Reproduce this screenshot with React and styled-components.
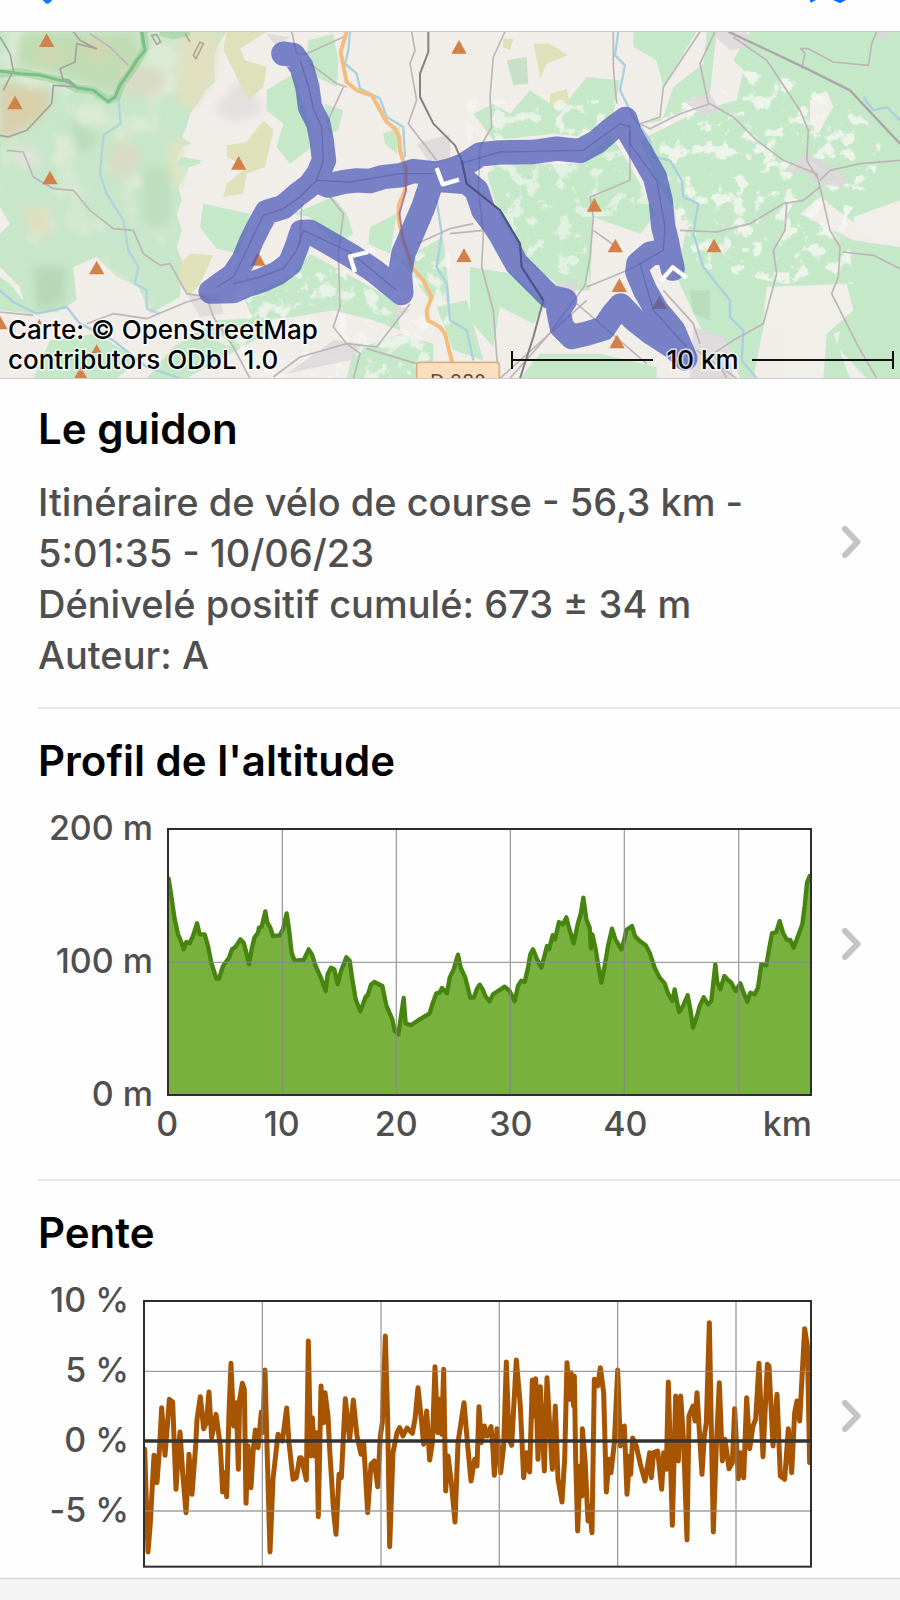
import React from "react";
import styled, { createGlobalStyle } from "styled-components";

const GlobalStyle = createGlobalStyle`
  * { box-sizing: border-box; }
  body {
    margin: 0;
    background: #fff;
    font-family: Inter, "Liberation Sans", sans-serif;
  }
`;

const Screen = styled.div`
  display: flex;
  flex-direction: column;
  height: 100vh;
  overflow: hidden;
  background: #fefefe;
`;

const NavBar = styled.header`
  display: flex;
  flex: none;
  justify-content: space-between;
  height: 31px;
  padding: 0 46px 0 36px;
`;

const IconButton = styled.button`
  display: block;
  height: 20px;
  padding: 0;
  border: 0;
  background: none;
`;

const Content = styled.main`
  flex: 1;
  min-height: 0;
  overflow: hidden;
`;

const TabBar = styled.footer`
  flex: none;
  height: 22px;
  border-top: 1px solid #cfcfd1;
  background: #f4f4f5;
`;

const MapFrame = styled.div`
  position: relative;
  height: 348px;
  border-top: 1px solid #cccccc;
  border-bottom: 1px solid #cccccc;
  overflow: hidden;
`;

const MapDrawing = styled.svg`
  display: block;
  width: 100%;
  height: 100%;
`;

const MapCaption = styled.div`
  position: absolute;
  right: 6px;
  bottom: 3px;
  left: 8px;
  display: flex;
  align-items: flex-end;
  justify-content: space-between;
  color: #000;
  font-size: 26px;
  font-weight: 500;
  line-height: 30px;
  -webkit-text-stroke: 3px rgba(255, 255, 255, 0.7);
  paint-order: stroke fill;
`;

const Attribution = styled.p`
  margin: 0;
`;

const ScaleBar = styled.div`
  display: flex;
  align-items: center;
  justify-content: space-between;
  width: 383px;
`;

const ScaleArm = styled.span`
  width: 142px;
  height: 18px;
  border-${(p) => p.$side}: 2px solid #111;
  background: linear-gradient(#111, #111) center / 100% 2px no-repeat;
`;

const Section = styled.section`
  margin-left: 38px;
  border-bottom: ${(p) => (p.$last ? "0" : "2px solid #e6e6e7")};
`;

const SectionLink = styled.a`
  display: flex;
  align-items: center;
  gap: 28px;
  padding: ${(p) => (p.$compact ? 24 : 26)}px 38px 26px 0;
  color: #4f4f50;
  text-decoration: none;
`;

const SectionBody = styled.div`
  flex: 1;
  min-width: 0;
`;

const Title = styled.h2`
  margin: 0 0 ${(p) => p.$gap}px;
  color: #000;
  font-size: 42px;
  font-weight: 600;
  line-height: 52px;
`;

const Details = styled.p`
  margin: 0;
  font-size: 38px;
  font-weight: 500;
  line-height: 51px;
`;

const Chart = styled.div`
  display: grid;
  grid-template-columns: ${(p) => p.$axis}px minmax(0, 1fr);
  column-gap: 14px;
  align-content: start;
  min-height: 325px;
`;

const YAxis = styled.div`
  display: flex;
  flex-direction: column;
  gap: ${(p) => p.$gap}px;
  height: 268px;
  margin-top: -20px;
  font-size: 34px;
  font-weight: 500;
  font-feature-settings: "calt" 0;
  line-height: 40px;
  text-align: right;
  white-space: nowrap;
`;

const Plot = styled.svg`
  display: block;
  width: 100%;
  height: 268px;
`;

const XAxis = styled.div`
  grid-column: 2;
  display: grid;
  grid-template-columns: repeat(5, 100fr) 113fr;
  margin: 8px 0 0 -57px;
  font-size: 34px;
  font-weight: 500;
  line-height: 40px;
  text-align: center;
`;

const Unit = styled.span`
  text-align: right;
`;

const ChevronIcon = styled.svg`
  flex: none;
  width: 22px;
  height: 34px;
`;

function Chevron() {
  return (
    <ChevronIcon viewBox="0 0 22 34" aria-hidden="true">
      <path d="M5 4L17.500 17L5 30" fill="none" stroke="#c4c4c6" strokeWidth="6" strokeLinecap="round" strokeLinejoin="round" />
    </ChevronIcon>
  );
}

const HALF = 1350;
const series = (west, east) =>
  west.trim() + " " +
  east.trim().split(/\s+/).map((pt) => {
    const [x, y] = pt.split(",").map(Number);
    return `${x + HALF},${y}`;
  }).join(" ");

const altitude = series(
  `507,478 515,530 525,600 535,645 542,660 552,690 560,668 570,672 580,650 592,612 600,645 615,645 625,680 635,730 650,778 658,778
   670,740 688,715 697,690 708,682 722,660 732,670 740,700 748,735 756,690 764,655 775,640 778,625 786,622 797,576 803,610 812,625
   820,650 840,648 850,630 861,582 868,630 876,700 885,724 912,722 927,690 937,705 948,740 965,778 978,815 984,765 994,745 1004,750
   1014,795 1024,755 1032,735 1040,714 1050,724 1058,780 1068,840 1082,876 1098,832 1104,828 1114,796 1124,788 1148,800 1160,858
   1178,900 1185,935 1196,945 1204,890 1212,836 1218,912 1234,918 1260,900 1290,882 1298,855 1310,822 1320,820 1327,806 1342,822 1350,775`,
  `12,750 25,706 33,745 47,775 62,835 72,835 82,808 90,796 100,812 107,830 120,846 130,825 145,815 165,802 180,815 195,846 205,800
   215,784 225,788 235,745 242,705 250,690 260,715 275,745 283,715 292,680 298,690 309,648 316,660 328,608 340,615 350,594 358,625
   372,672 384,615 394,580 401,535 410,600 420,625 424,688 428,645 438,690 447,745 455,790 465,740 475,680 487,628 497,660 515,690
   524,660 530,632 547,620 556,650 570,665 588,678 600,700 615,745 630,775 645,792 655,822 668,845 675,810 688,878 700,860 714,828
   722,870 730,925 742,890 750,860 762,834 775,855 785,845 797,735 803,790 812,810 824,770 835,782 845,790 858,815 872,792 882,820
   893,847 902,820 915,825 925,805 935,735 950,738 958,690 967,642 980,638 990,605 1000,640 1012,662 1022,662 1032,685 1045,650
   1058,615 1065,560 1072,490 1080,470`
);

const slope = series(
  `435,870 445,1178 452,1090 463,888 472,970 480,860 486,745 496,888 503,800 509,720 519,728 524,860 529,990 536,880 541,818 549,940
   559,1060 564,980 568,885 577,1005 588,860 592,780 602,712 612,808 620,790 628,698 636,835 649,765 662,860 669,998 674,940 681,1012
   688,760 694,612 702,800 710,730 716,930 720,720 728,672 734,690 739,1032 745,860 754,985 760,880 767,812 775,865 785,758 789,820
   796,632 802,860 811,1178 820,960 835,825 848,845 861,746 868,850 880,960 890,955 900,895 905,895 920,962 926,545 933,890 938,775
   945,890 951,820 956,1072 964,680 972,790 976,700 985,770 990,870 1002,1060 1009,1125 1018,945 1025,955 1037,718 1050,840 1061,722
   1072,830 1084,885 1092,850 1104,1060 1114,915 1124,905 1134,982 1142,830 1148,790 1157,530 1164,780 1170,1162 1180,880 1192,820
   1200,805 1210,830 1222,806 1238,822 1246,780 1255,685 1264,770 1272,855 1281,755 1290,902 1298,850 1306,622 1314,820 1320,720
   1326,825 1332,630 1338,995 1345,890`,
  `5,970 16,1088 25,850 43,730 55,870 64,965 75,900 82,920 88,742 95,850 104,800 112,830 124,802 130,870 134,948 142,808 153,940
   162,860 170,608 178,840 186,858 200,602 212,740 222,955 230,880 240,938 248,662 252,770 258,658 265,900 272,682 284,935 292,655
   300,800 308,930 317,740 325,960 337,1028 345,900 352,610 360,720 364,640 372,740 374,650 378,900 384,1115 392,920 397,1010
   398,808 406,900 415,1085 419,1040 427,1120 434,660 444,680 452,625 462,700 470,998 478,900 484,940 494,850 504,632 512,860
   524,800 532,1005 540,890 543,945 549,836 560,860 572,915 586,965 600,880 605,955 612,880 624,875 636,990 642,880 650,930
   656,668 668,1098 678,710 686,905 693,710 702,850 712,1142 718,770 730,740 736,785 742,700 757,945 764,830 770,790 779,490
   791,1118 800,860 809,670 818,905 826,840 838,928 848,910 855,748 866,958 873,880 882,955 891,715 900,868 910,800 918,780
   928,612 940,892 953,615 958,620 970,860 982,705 992,950 1005,960 1016,808 1026,940 1035,760 1042,725 1050,785 1065,508
   1073,560 1080,910`
);

const peaks = [
  [140, 120], [45, 307], [150, 532], [290, 802], [716, 488], [774, 776], [0, 967], [242, 1120],
  [1377, 140], [1783, 614], [1846, 736], [2142, 736], [1392, 765], [1858, 855], [1851, 1024],
];

const ROUTE =
  "M850 160L880 164L905 200L922 260L930 320L955 370L965 420L972 480L955 520L930 555L890 585L850 620L800 635L780 670L755 720L730 780L700 825L632 874L700 872L740 855L790 838L830 820L870 790L890 740L905 695L930 694L1000 735L1060 770L1120 810L1170 850L1204 878L1200 820L1210 760L1240 690L1270 620L1290 560L1310 520" +
  "M950 540L985 556L1030 545L1070 540L1110 542L1150 530L1200 525L1240 512L1310 520L1350 510L1390 495L1440 462L1500 456L1600 455L1670 445L1740 452L1790 425L1830 390L1876 356L1890 400L1925 460L1965 530L1982 600L1990 680L2000 720L2010 770L2018 805" +
  "M2000 750L1950 760L1915 790L1912 815L1935 870L1970 930L2020 990L2056 1074L2020 1040L1950 995L1900 955L1862 915L1840 940L1810 985L1760 1000L1715 1010L1685 980L1675 930L1695 900L1650 890L1600 840L1550 790L1500 700L1480 670L1450 630L1430 570L1400 545L1330 540";

function RouteMap() {
  return (
    <MapDrawing viewBox="0 94 2700 1040" preserveAspectRatio="xMidYMid slice" role="img" aria-label="Le guidon">
      <defs>
        <filter id="clearings" x="0" y="0" width="1" height="1">
          <feTurbulence type="fractalNoise" baseFrequency="0.021" numOctaves="4" seed="8" />
          <feColorMatrix values="0 0 0 0 0.93  0 0 0 0 0.93  0 0 0 0 0.895  10 0 0 0 -5.5" />
          <feComposite in2="SourceGraphic" operator="in" />
        </filter>
        <filter id="relief" x="0" y="0" width="1" height="1">
          <feTurbulence type="fractalNoise" baseFrequency="0.007" numOctaves="3" seed="3" />
          <feColorMatrix values="0 0 0 0 0.87  0 0 0 0 0.85  0 0 0 0 0.75  5 0 0 0 -2.6" />
          <feComposite in2="SourceGraphic" operator="in" />
        </filter>
        <filter id="soft" x="-20%" y="-20%" width="140%" height="140%">
          <feGaussianBlur stdDeviation="12" />
        </filter>
      </defs>
      <rect y="94" width="2700" height="1040" fill="#f1eeea" />

      {/* uplands west of the valley */}
      <path d="M0 94H680L650 140L640 180L645 245L615 270L600 300L570 340L560 380L545 410L575 430L545 440L530 480L600 478L600 490L565 500L560 520L535 560L545 600L530 640L545 690L530 740L545 780L540 890L450 940L415 860L350 830L290 770L220 800L230 900L170 935L80 940L60 860L0 800V700L30 670L0 620Z" fill="#c8e6c9" />
      <path d="M0 94H680L640 180L645 245L600 300L560 380L530 440L560 510L545 580L535 690L545 780L540 890L450 940L415 860L350 830L0 700Z" fill="#fff" opacity=".5" filter="url(#relief)" />
      <g filter="url(#soft)">
        <path d="M0 250L150 270L140 340L30 410H0Z" fill="#d9cfab" />
        <path d="M60 100H400L420 180L340 280L210 230L50 200Z" fill="#bfdcb4" />
        <path d="M100 140L180 130L200 180L130 200ZM240 120L320 110L330 180L280 200Z" fill="#cfd8b0" />
        <path d="M540 94H660L640 230L580 330L530 300Z" fill="#e1e0c0" />
        <path d="M510 420H560L530 500L560 560L510 540Z" fill="#dfe3c0" />
        <path d="M75 620H150V710L80 690Z" fill="#dfdfc0" />
        <path d="M360 200L500 210L480 280L380 290ZM340 420L420 440L400 520L330 530Z" fill="#d9dcc4" />
        <path d="M100 800H200L190 910L110 930Z" fill="#b7d8b6" />
        <path d="M200 340L300 420L240 460Z" fill="#b9dcba" />
        <path d="M430 500H510V680H430Z" fill="#bddfbe" />
        <path d="M40 440L110 450L120 500L60 500Z" fill="#e2e3da" />
        <path d="M720 230L800 330L700 370L640 330Z" fill="#e3e0e0" />
      </g>
      <g fill="#dfe1bb">
        <path d="M680 94H800L720 145L735 180L800 200L790 260L745 300L700 210L670 150Z" />
        <path d="M790 360L820 390L795 500L740 520L730 580L670 590L680 550L740 500L680 470V435L740 425Z" />
        <path d="M540 790L570 760L640 765L600 850L570 885L535 850Z" />
        <path d="M1600 130H1650L1705 165L1640 190L1620 235L1610 180Z" />
        <path d="M1510 115H1540L1530 150L1508 140ZM1650 280L1700 265L1710 310L1650 320Z" />
      </g>
      <g fill="#c5e8c9">
        <path d="M545 470L605 480L570 500L530 495ZM610 610L750 640L720 760L650 745L600 680Z" />
        <path d="M925 120L1000 100L1015 180L1010 260L950 230L920 180Z" />
        <path d="M800 270L880 220L930 370L935 440L870 490L830 440L850 370L800 330Z" />
        <path d="M975 310L1030 330L1015 390L985 400ZM1150 400L1200 380L1190 460L1155 430Z" />
        <path d="M880 640L1000 590L1040 640L1060 700L1010 730L930 650ZM1110 680L1190 640L1170 760L1105 730Z" />
        <path d="M930 760L1130 870L1190 910L1200 990L1120 960L1000 930L880 950L760 960L730 890L870 830Z" />
        <path d="M1200 780L1330 710L1350 900L1290 900L1230 820ZM1310 920L1400 900L1450 1080L1360 1050Z" />
        <path d="M1060 1050L1200 1000L1300 1030V1134H1040ZM650 960L820 950L800 1000L560 1134H440L520 1040Z" />
        <path d="M150 1020L290 1000L420 1080L350 1134H100ZM0 830L30 850L100 940L0 930Z" />
        <path d="M1420 340L1480 310L1530 340L1590 270L1680 330L1760 230L1860 240L1840 340L1760 410L1660 400L1480 420Z" />
        <path d="M1460 520L1480 490L1740 490L1830 400L1880 480L1970 640L1920 700L1780 650L1770 870L1700 870L1570 780L1500 650Z" />
        <path d="M1900 94H2090L1990 260L1970 180L1900 140Z" />
        <path d="M2020 260L2110 190L2120 94H2150L2130 280L2000 360L1930 370L1990 350Z" />
        <path d="M2200 180L2250 94H2700V700L2580 680L2460 590L2400 640L2560 720L2700 740V920L2500 1000L2550 1134H2450L2380 1060L2350 870L2310 880L2260 1134H2220L2170 1010L2110 1000L2030 830L2060 680L1980 560L1920 420L2100 330L2210 300L2230 210Z" />
        <path d="M1410 800L1540 820L1640 910L1600 970L1500 920L1480 1040L1410 960ZM1560 1134L1620 1060L1800 1060L1970 1100V1134Z" />
        <path d="M2540 900L2630 830H2700V1134H2600L2510 1040Z" />
      </g>
      <path d="M2430 300L2480 270L2500 320L2460 390L2430 370ZM2560 650L2700 600V740L2570 700ZM2300 860L2540 850L2560 930L2480 1000L2470 1134H2340L2350 1000L2290 960Z" fill="#f1efe9" />
      <path d="M1930 370L2230 210L2450 250L2650 400L2620 540L2540 650L2560 850L2350 850L2100 800L2030 650Z" fill="#fff" opacity=".8" filter="url(#clearings)" />
      <path d="M1440 490L1880 450L1970 640L1750 650L1770 860L1560 760Z" fill="#fff" opacity=".6" filter="url(#clearings)" />
      <path d="M750 780L1350 720V1134H600ZM1400 300H1850V420H1400Z" fill="#fff" opacity=".7" filter="url(#clearings)" />
      <path d="M1520 180L1580 170L1585 250L1540 255ZM2070 870H2130V960L2080 940Z" fill="#b2d9b5" opacity=".65" />

      {/* built-up areas */}
      <g fill="#dcd8da" opacity=".8">
        <path d="M2370 490L2420 460L2490 490L2540 530L2530 560L2450 550L2420 520L2350 515Z" />
        <path d="M2130 94H2240L2250 140L2190 150ZM2050 300L2130 280L2160 330L2110 350Z" />
        <path d="M1250 430L1350 400V480L1290 490ZM560 880L660 880L670 940L600 950Z" />
        <path d="M2080 980L2180 1010L2200 1134H2070ZM1650 850L1740 840L1720 890ZM800 100L870 110L830 140Z" />
        <path d="M1000 1020L1090 1030L1050 1080L860 1120ZM1180 910L1230 930L1190 960ZM2630 94H2670L2640 125Z" />
      </g>

      {/* green park boundary */}
      <g fill="none" strokeLinejoin="round">
        <path d="M0 220L60 215L180 240L230 265L280 270L325 300L350 290L365 250L395 210L435 145L430 94M480 94L520 105L570 94" stroke="#8ac891" strokeWidth="24" opacity=".45" />
        <path d="M0 212L60 220L120 224L180 240L205 240L230 262L280 270L325 304L345 290L360 255L395 205L412 178L435 150L425 94" stroke="#68b778" strokeWidth="9" opacity=".75" />
      </g>

      {/* watercourses */}
      <g fill="none" stroke="#aad0df" strokeWidth="7" strokeLinejoin="round">
        <path d="M355 290L362 370L310 405L300 520L320 580L370 660L385 750L415 800L405 850L440 870V925L480 940" opacity=".8" />
        <path d="M0 870L40 905L110 940L200 920L240 970L340 1020L440 1100L540 1134" />
        <path d="M1050 94L1045 150L1035 190L1070 220L1080 265L1140 295L1160 350L1210 380L1215 470M1310 600L1325 700L1310 800L1340 850L1350 960L1400 990L1420 1080" />
        <path d="M1855 94L1845 165L1875 195L1860 270L1900 350L1950 420L1960 470L2010 480L2045 540L2050 590L2095 610L2080 700L2110 800L2190 900L2190 950L2230 990L2225 1080L2270 1134" />
        <path d="M2590 290L2620 330L2660 320L2700 360" />
      </g>

      {/* minor roads */}
      <g fill="none" stroke="#bdb5b7" strokeWidth="5" strokeLinejoin="round">
        <path d="M220 94L240 120L290 145L230 130L225 185L180 205L190 240L230 260L160 255L155 310L80 390L25 410L0 405M0 110L30 160L40 210L10 270" stroke="#a6a29e" />
        <path d="M270 100L330 140L385 195M20 450L70 455L100 530L160 565L220 570L270 630L340 685L400 690L430 760L480 795L510 790L560 880L620 890M0 935L100 945M260 970L340 940L440 955L560 905L620 890L640 950L700 1040L750 1134" />
        <path d="M875 94L890 160L920 160L1030 110M930 190L1010 250L1040 260M1030 260L980 370M990 590L1030 640L1015 760L1020 920L1000 980L1040 1030L1130 1040L1230 910M820 1130L900 1070L1040 1030L1080 1060L1060 1134M1100 1045L1250 1090M1235 94L1245 150L1230 190L1250 300L1225 370L1310 480M905 610L900 730M1250 730L1350 685L1420 670M1350 700L1450 690" />
        <path d="M1515 94L1480 170L1470 290L1475 380L1440 440L1435 560L1450 700L1445 800L1480 930L1495 1134M1840 94L1840 200L1850 310M1890 390V540L1770 590L1780 650L1770 770L1755 855L1640 1010L1530 1134M1780 690L1850 740M1760 860L1870 815L1920 790M1730 910L1940 1090" />
        <path d="M2100 94L1990 260L1980 350L1920 370L1950 385L2040 340L2130 310L2200 350L2270 420L2350 480L2450 520L2460 560L2410 600L2350 610L2250 670L2150 695L2040 690M2145 94L2100 190L2125 310M2200 110L2300 180L2400 330L2425 390L2420 480L2450 530M2460 540L2490 510L2580 490L2700 480M2460 560L2490 690L2520 740L2515 830L2495 880L2570 1030L2630 1134M2530 755L2620 765L2700 805M2360 610L2355 690L2320 750L2330 820L2290 970L2200 1020L2140 1060L2180 1134M1990 870L2080 970L2100 1030" />
        <path d="M2405 205L2415 160L2402 145L2425 145L2500 185L2605 195L2615 130L2630 94M1500 1134L1760 900M2090 1050L2210 1134" />
        <path d="M2185 94L2420 205L2550 270L2700 430" stroke="#aaa6aa" strokeWidth="7" />
      </g>
      <path d="M455 105L470 103L482 125L470 132ZM580 165L600 125L610 130L588 175ZM555 100L570 125" fill="none" stroke="#aaa99b" strokeWidth="5" />

      {/* railway and main road */}
      <path d="M1285 94V155L1260 220V290L1300 370L1365 435L1385 480L1400 550L1500 630L1560 730L1565 800L1630 900L1600 1010L1560 1134" fill="none" stroke="#828282" strokeWidth="6" strokeLinejoin="round" />
      <path d="M1040 94L1022 155L1040 245L1070 270L1115 285L1135 320L1160 365L1185 385L1198 410L1200 450L1218 510L1215 570L1196 615V660L1210 720L1235 800L1270 840L1295 890L1280 930L1283 960L1320 980L1335 1000L1360 1100" fill="none" stroke="#f5bd7d" strokeWidth="12" strokeLinejoin="round" />

      <g fill="#d28149">
        {peaks.map(([x, y]) => (
          <path key={`${x}-${y}`} d={`M${x} ${y - 21}L${x + 23} ${y + 20}H${x - 23}Z`} />
        ))}
        <path d="M1978 886L2001 926H1955ZM118 955L126 972H110ZM290 1032L305 1058H275Z" />
      </g>

      <g opacity=".72">
        <path d={ROUTE} fill="none" stroke="#4b58b9" strokeWidth="73" strokeLinecap="round" strokeLinejoin="round" />
        <path d="M632 874L660 845L710 825L730 850L690 870Z" fill="#4b58b9" stroke="#4b58b9" strokeWidth="60" strokeLinejoin="round" />
      </g>
      <path d="M900 180L925 255L940 325L965 380L970 480L950 540L900 590L850 625L790 645L730 770L700 830L650 860M700 850L780 830L850 805L890 750L910 690L1050 755L1190 870M950 540L1050 545L1200 520L1300 520M1380 490L1500 455L1750 450L1860 370L1890 380V430L1970 540L1995 680L1990 750L1920 790L1960 930L2060 1040" fill="none" stroke="#535ba7" strokeWidth="4" strokeLinejoin="round" opacity=".6" />
      <path d="M1385 480L1400 550L1500 630L1560 730L1565 800L1630 900" fill="none" stroke="#4e5386" strokeWidth="6" strokeLinejoin="round" />
      <path d="M1218 490V570L1198 640L1210 720L1235 790" fill="none" stroke="#8a5f8f" strokeWidth="6" opacity=".7" />
      <path d="M1310 503L1328 552L1377 538M1105 755L1050 768L1065 815M1983 842L2018 801L2060 832" fill="none" stroke="#fff" strokeWidth="13" strokeLinejoin="round" />

      <rect x="1250" y="1086" width="248" height="90" rx="8" fill="#fbdfbd" stroke="#d7b085" strokeWidth="5" />
      <text x="1374" y="1164" textAnchor="middle" fontFamily="DejaVu Sans, sans-serif" fontSize="56" fill="#5a4935">D 980</text>
    </MapDrawing>
  );
}

export default function App() {
  return (
    <Screen>
      <GlobalStyle />
      <NavBar>
        <IconButton type="button" aria-label="Retour">
          <svg width="24" height="20" viewBox="0 0 24 20">
            <path d="M3 -9L11.500 0L18 -7" fill="none" stroke="#0a7aff" strokeWidth="7" strokeLinecap="round" strokeLinejoin="round" />
          </svg>
        </IconButton>
        <IconButton type="button" aria-label="Carte">
          <svg width="44" height="20" viewBox="0 0 44 20">
            <path d="M0 1L9 -4M19 -4L30 1L41 -5" fill="none" stroke="#0a6cff" strokeWidth="4" strokeLinejoin="round" />
          </svg>
        </IconButton>
      </NavBar>

      <Content>
        <MapFrame>
          <RouteMap />
          <MapCaption>
            <Attribution>
              Carte: © OpenStreetMap
              <br />
              contributors ODbL 1.0
            </Attribution>
            <ScaleBar>
              <ScaleArm $side="left" />
              10 km
              <ScaleArm $side="right" />
            </ScaleBar>
          </MapCaption>
        </MapFrame>

        <Section>
          <SectionLink href="#details" $compact>
            <SectionBody>
              <Title $gap={22}>Le guidon</Title>
              <Details>
                Itinéraire de vélo de course - 56,3 km -
                <br />
                5:01:35 - 10/06/23
                <br />
                Dénivelé positif cumulé: 673 ± 34 m
                <br />
                Auteur: A
              </Details>
            </SectionBody>
            <Chevron />
          </SectionLink>
        </Section>

        <Section>
          <SectionLink href="#altitude">
            <SectionBody>
              <Title $gap={41}>Profil de l'altitude</Title>
              <Chart $axis={115}>
                <YAxis $gap={93}>
                  <span>200 m</span>
                  <span>100 m</span>
                  <span>0 m</span>
                </YAxis>
                <Plot viewBox="502 326 1935 804" preserveAspectRatio="none" role="img" aria-label="Profil de l'altitude">
                  <path d={`M507 1127L${altitude}L2434 470V1127Z`} fill="#79b13f" />
                  <polyline points={altitude} fill="none" stroke="#478410" strokeWidth="13" strokeLinejoin="round" strokeLinecap="round" />
                  <path d="M848 329V1127M1190 329V1127M1532 329V1127M1874 329V1127M2217 329V1127M505 729H2434" stroke="#888" strokeOpacity=".8" strokeWidth="4" />
                  <rect x="505" y="329" width="1929" height="798" fill="none" stroke="#2d2d2d" strokeWidth="6" />
                </Plot>
                <XAxis>
                  <span>0</span>
                  <span>10</span>
                  <span>20</span>
                  <span>30</span>
                  <span>40</span>
                  <Unit>km</Unit>
                </XAxis>
              </Chart>
            </SectionBody>
            <Chevron />
          </SectionLink>
        </Section>

        <Section $last>
          <SectionLink href="#pente">
            <SectionBody>
              <Title $gap={41}>Pente</Title>
              <Chart $axis={91}>
                <YAxis $gap={30}>
                  <span>10 %</span>
                  <span>5 %</span>
                  <span>0 %</span>
                  <span>-5 %</span>
                </YAxis>
                <Plot viewBox="430 422 2007 804" preserveAspectRatio="none" role="img" aria-label="Pente">
                  <polyline points={slope} fill="none" stroke="#a85502" strokeWidth="15" strokeLinejoin="round" strokeLinecap="round" />
                  <path d="M788 425V1222M1144 425V1222M1499 425V1222M1854 425V1222M2209 425V1222M433 636H2434M433 1055H2434" stroke="#888" strokeOpacity=".8" strokeWidth="4" />
                  <path d="M433 845H2434" stroke="#333" strokeWidth="10" />
                  <rect x="433" y="425" width="2001" height="797" fill="none" stroke="#2d2d2d" strokeWidth="6" />
                </Plot>
              </Chart>
            </SectionBody>
            <Chevron />
          </SectionLink>
        </Section>
      </Content>
      <TabBar />
    </Screen>
  );
}
